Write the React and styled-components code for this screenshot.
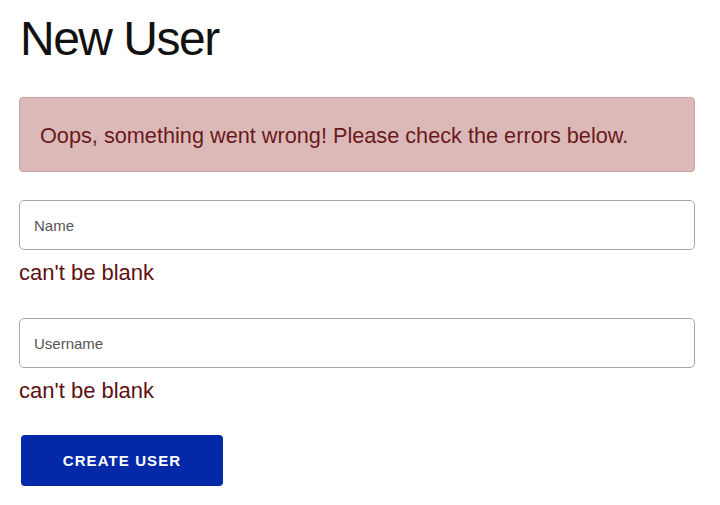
import React from 'react'
import styled, { createGlobalStyle } from 'styled-components'

const GlobalStyle = createGlobalStyle`
    body {
        margin: 0;
        background: #ffffff;
        font-family: "Liberation Sans", Arial, sans-serif;
    }
`

const Page = styled.div`
    padding: 0 25px 0 19px;
    display: flex;
    flex-direction: column;
`

const Title = styled.h1`
    margin: 10px 0 0 1px;
    font-size: 48px;
    font-weight: 400;
    line-height: 58px;
    color: #111111;
    letter-spacing: -1.5px;
`

const Alert = styled.div`
    margin-top: 29px;
    height: 75px;
    box-sizing: border-box;
    display: flex;
    align-items: center;
    padding: 2px 20px 0;
    background-color: #dcb9b9;
    border: 1px solid #cd9ea3;
    border-radius: 4px;
    color: #6a1a1a;
    font-size: 21.7px;
`

const Form = styled.form`
    margin-top: 28px;
    display: flex;
    flex-direction: column;
`

const Field = styled.div`
    display: flex;
    flex-direction: column;
    margin-bottom: ${ props => props.last ? '31px' : '32px' };
`

const Input = styled.input`
    height: 50px;
    box-sizing: border-box;
    border: 1.5px solid #a8a8a8;
    border-radius: 5px;
    padding: 0 14px;
    font-family: "Liberation Sans", Arial, sans-serif;
    font-size: 15px;
    color: #333333;
    background: #ffffff;
    outline: none;

    &::placeholder {
        color: #555555;
    }
`

const FieldError = styled.div`
    margin-top: 10px;
    font-size: 22px;
    line-height: 26px;
    color: #5e1010;
`

const Button = styled.button`
    margin-left: 2px;
    width: 202px;
    height: 51px;
    border: none;
    border-radius: 4px;
    background-color: #0328a8;
    color: #ffffff;
    font-family: "Liberation Sans", Arial, sans-serif;
    font-weight: 700;
    font-size: 15px;
    letter-spacing: 1.1px;
    text-transform: uppercase;
    cursor: pointer;
`

export default function App(){
    return <>
        <GlobalStyle/>
        <Page>
            <Title>New User</Title>
            <Alert>Oops, something went wrong! Please check the errors below.</Alert>
            <Form onSubmit={e => e.preventDefault()}>
                <Field>
                    <Input placeholder="Name"/>
                    <FieldError>can't be blank</FieldError>
                </Field>
                <Field last>
                    <Input placeholder="Username"/>
                    <FieldError>can't be blank</FieldError>
                </Field>
                <div>
                    <Button type="submit">Create User</Button>
                </div>
            </Form>
        </Page>
    </>
}
